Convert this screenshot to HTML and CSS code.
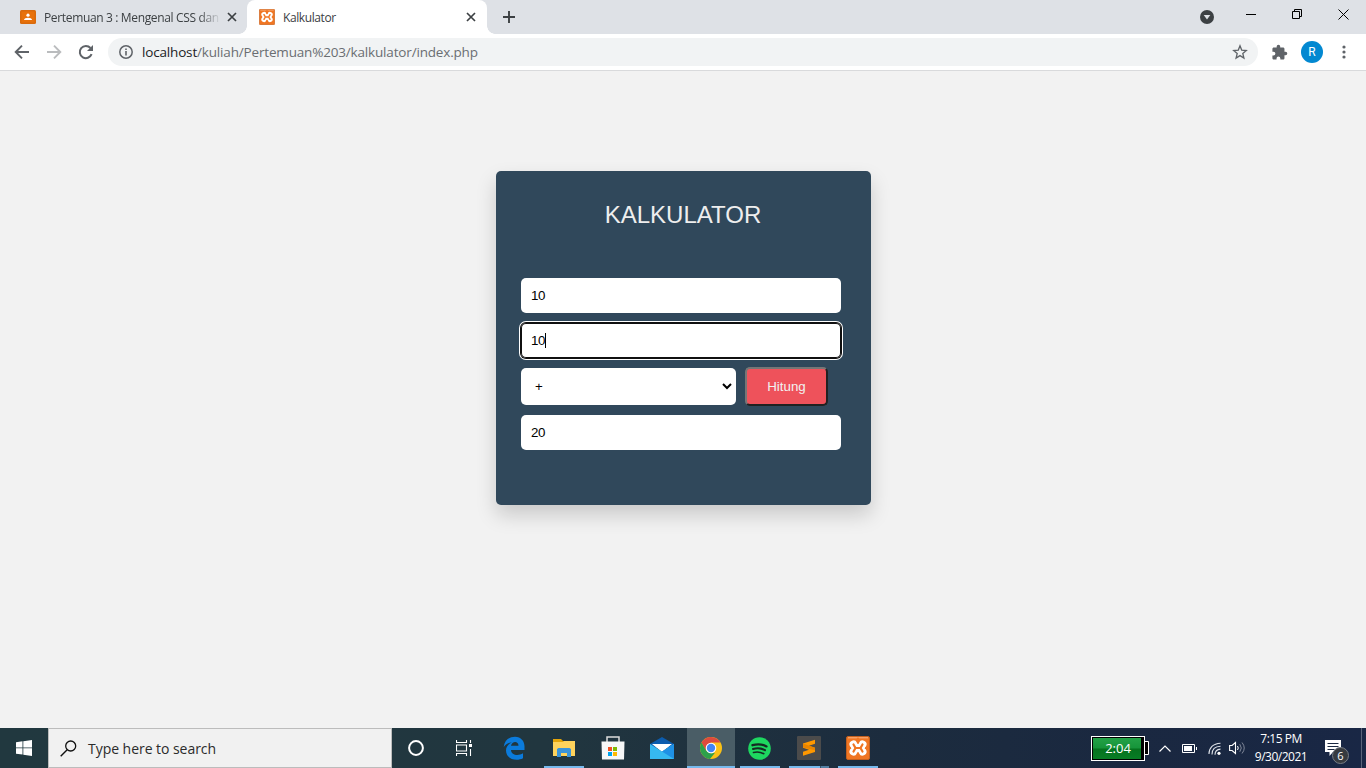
FILE: index.html
```html
<!DOCTYPE html>
<html lang="id">
<head>
<meta charset="utf-8">
<title>Kalkulator</title>
<link rel="stylesheet" href="styles.css">
</head>
<body>
<svg class="defs" width="0" height="0">
  <symbol id="xampp" viewBox="0 0 24 24">
    <rect x=".5" y=".5" width="23" height="23" rx="1.500" fill="#f07623" stroke="#c4601f"/>
    <path d="M2 1.800h20" stroke="#f9b483" stroke-width="1"/>
    <g fill="none" stroke-linecap="round" stroke-linejoin="round">
      <path d="M7.500 8.500l2 3.500-2 3.500M16.500 8.500l-2 3.500 2 3.500M9.500 12h5" stroke="#fff" stroke-width="8"/>
      <path d="M12 2.800v3.600M12 17.600v3.600M3 12h.8M20.200 12h.8" stroke="#f07623" stroke-width="2.400"/>
      <path d="M7.500 8.500l2 3.500-2 3.500M16.500 8.500l-2 3.500 2 3.500M9.500 12h5" stroke="#f07623" stroke-width="2.200"/>
    </g>
  </symbol>
  <symbol id="close" viewBox="0 0 10 10"><path d="M1 1l8 8M9 1L1 9" stroke="#3c4043" stroke-width="1.700"/></symbol>
</svg>
<header class="tabs">
  <div class="tab tab-idle">
    <svg class="fav" viewBox="0 0 16 14"><rect width="16" height="14" rx="1.500" fill="#d96a0c"/><rect x="1.500" y="1.500" width="13" height="11" fill="#e8710a"/><circle cx="8" cy="5.200" r="1.600" fill="#fff"/><path d="M4 10c0-3 8-3 8 0z" fill="#fff"/></svg>
    <span class="tab-name fade">Pertemuan 3 : Mengenal CSS dan</span>
    <svg class="x"><use href="#close"/></svg>
  </div>
  <div class="tab tab-active">
    <svg class="fav-x"><use href="#xampp"/></svg>
    <span class="tab-name kal">Kalkulator</span>
    <svg class="x"><use href="#close"/></svg>
  </div>
  <svg class="plus" viewBox="0 0 12 12"><path d="M6 0v12M0 6h12" stroke="#3c4043" stroke-width="1.900"/></svg>
  <div class="window-buttons">
    <svg width="14" height="14" viewBox="0 0 14 14"><circle cx="7" cy="7" r="7" fill="#3c4043"/><path d="M3.700 5h6.600L7 9.500z" fill="#dee1e6"/></svg>
    <svg width="10" height="10" viewBox="0 0 10 10"><path d="M0 5.500h10" stroke="#000"/></svg>
    <svg width="10" height="10" viewBox="0 0 10 10"><path d="M.5 2.500h7v7h-7zM2.500 2.500v-2h7v7h-2" fill="none" stroke="#000"/></svg>
    <svg width="11" height="11" viewBox="0 0 11 11"><path d="M.5.5l10 10M10.500.5l-10 10" stroke="#000"/></svg>
  </div>
</header>
<nav class="toolbar">
  <svg width="16" height="16" viewBox="0 0 16 16"><path d="M15 8H2M8 1.700L1.700 8 8 14.300" fill="none" stroke="#5f6368" stroke-width="1.900"/></svg>
  <svg width="16" height="16" viewBox="0 0 16 16"><path d="M1 8h13M8 1.700L14.300 8 8 14.300" fill="none" stroke="#babcbe" stroke-width="1.900"/></svg>
  <svg width="16" height="16" viewBox="0 0 16 16"><path d="M13.600 10.200A6.100 6.100 0 1 1 12.500 4" fill="none" stroke="#5f6368" stroke-width="2"/><path d="M15 1v6H9z" fill="#5f6368"/></svg>
  <div class="address">
    <svg width="14" height="14" viewBox="0 0 14 14"><circle cx="7" cy="7" r="6.200" fill="none" stroke="#5f6368" stroke-width="1.500"/><path d="M7 6v4.500M7 3.500V5" stroke="#5f6368" stroke-width="1.600"/></svg>
    <span class="url"><b>localhost</b>/kuliah/Pertemuan%203/kalkulator/index.php</span>
    <svg class="star" width="16" height="16" viewBox="0 0 16 16"><path d="M8 1.800l1.700 4.300 4.600.4-3.500 3 1.100 4.500L8 11.600 4.100 14l1.100-4.500-3.500-3 4.600-.4z" fill="none" stroke="#5f6368" stroke-width="1.300"/></svg>
  </div>
  <svg class="puzzle" width="17" height="17" viewBox="0 0 24 24"><path fill="#5f6368" d="M20.500 11H19V7c0-1.100-.9-2-2-2h-4V3.500a2.500 2.500 0 0 0-5 0V5H4c-1.100 0-2 .9-2 2v3.800h1.500a2.700 2.700 0 0 1 0 5.400H2V20c0 1.100.9 2 2 2h3.800v-1.500a2.700 2.700 0 0 1 5.400 0V22H17c1.100 0 2-.9 2-2v-4h1.500a2.500 2.500 0 0 0 0-5z"/></svg>
  <span class="avatar">R</span>
  <svg class="dots" width="4" height="14" viewBox="0 0 4 14"><g fill="#5f6368"><circle cx="2" cy="2" r="1.600"/><circle cx="2" cy="7" r="1.600"/><circle cx="2" cy="12" r="1.600"/></g></svg>
</nav>
<main class="page">
  <form class="card">
    <h2>KALKULATOR</h2>
    <input class="field" type="text" value="10">
    <div class="field focused">10<i class="caret"></i></div>
    <div class="row">
      <div class="operator">
        <span>+</span>
        <svg width="10" height="7" viewBox="0 0 10 7"><path d="M1 1l4 4 4-4" fill="none" stroke="#000" stroke-width="2"/></svg>
      </div>
      <button class="submit" type="button">Hitung</button>
    </div>
    <input class="field" type="text" value="20">
  </form>
</main>
<footer class="taskbar">
  <div class="start"><svg width="16" height="16" viewBox="0 0 16 16"><path fill="#fff" d="M0 2.200l6.500-.9v6.200H0zM7.300 1.200L16 0v7.500H7.300zM0 8.300h6.500v6.300L0 13.700zM7.300 8.300H16V16l-8.700-1.200z"/></svg></div>
  <div class="search">
    <svg width="17" height="17" viewBox="0 0 17 17"><circle cx="10.700" cy="6" r="5" fill="none" stroke="#111" stroke-width="1.300"/><path d="M7.200 9.700L.7 16.200" stroke="#111" stroke-width="1.400"/></svg>
    <span>Type here to search</span>
  </div>
  <div class="app system"><svg width="18" height="18" viewBox="0 0 18 18"><circle cx="9" cy="9" r="6.900" fill="none" stroke="#fff" stroke-width="2"/></svg></div>
  <div class="app system"><svg width="17" height="16" viewBox="0 0 17 16"><path d="M.5 0v2.500h10V0M.5 16v-2.500h10V16M.5 5h10v6H.5zM14.500 0v3M14.500 9v7" fill="none" stroke="#fff" stroke-width="1.100"/><rect x="13" y="4" width="3" height="3" fill="#fff"/></svg></div>
  <div class="app edge"><svg width="22" height="24" viewBox="0 0 22 24"><path fill="#0b7bdc" d="M.7 11C1.500 4 6.500.8 12 .8c6 0 9.500 4.500 9.500 9.500v3.600H8c.2 5.500 7.500 6.300 12 3.400v5C13 25.800 3 23 3 14.600c0-4 2.500-6.800 5.800-8C5.500 6.500 2.500 8.300.7 11zM8 9.800h7.500C15.500 4.500 8.800 5 8 9.800z"/></svg></div>
  <div class="app open"><svg width="22" height="18" viewBox="0 0 22 18"><path d="M0 0h8l2 2h12v15H0z" fill="#e5a50a"/><path d="M0 3h10l1-1h11v15H0z" fill="#ffd35c"/><path d="M4 18v-8l1.500-1h11l1.500 1v8h-4v-4H8v4z" fill="#3b94d9"/></svg></div>
  <div class="app"><svg width="24" height="24" viewBox="0 0 24 24"><path d="M6 6V1h12v5" fill="none" stroke="#ddd" stroke-width="1.500"/><path d="M.5 5.500h23l-.5 18H1z" fill="#f7f7f7"/><path fill="#f25022" d="M7 11h4v4H7z"/><path fill="#7fba00" d="M12 11h4v4h-4z"/><path fill="#00a4ef" d="M7 16h4v4H7z"/><path fill="#ffb900" d="M12 16h4v4h-4z"/></svg></div>
  <div class="app"><svg width="24" height="22" viewBox="0 0 24 22"><path fill="#0c5cad" d="M0 7l12-7 12 7v4H0z"/><path fill="#fff" d="M2 7h20l-10 8z"/><path fill="#36b9f1" d="M0 7l12 7.500L24 7v15H0z"/><path fill="#1f91e5" d="M24 7v15L12 14.500z"/></svg></div>
  <div class="app open current"><svg width="22" height="22" viewBox="0 0 22 22"><circle cx="11" cy="11" r="11" fill="#fbc116"/><path fill="#dd4a3e" d="M1.500 5.500A11 11 0 0 1 20.500 5.600H11L6 14z"/><path fill="#2da14b" d="M1.500 5.500L6.200 13.700 11 16.500l4-.8L10 22A11 11 0 0 1 1.500 5.500z"/><circle cx="11" cy="11" r="5.300" fill="#fff"/><circle cx="11" cy="11" r="4.200" fill="#4285f4"/></svg></div>
  <div class="app open"><svg width="23" height="23" viewBox="0 0 23 23"><circle cx="11.500" cy="11.500" r="11.300" fill="#1ed760"/><g fill="none" stroke="#152a23" stroke-linecap="round"><path d="M4.500 8.200c5-1.500 10-1 14 1.200" stroke-width="2.300"/><path d="M5 12c4.500-1.300 8.500-.8 12 1.200" stroke-width="2"/><path d="M5.500 15.500c4-1 7-.5 10.300 1.200" stroke-width="1.600"/></g></svg></div>
  <div class="app open stacked"><svg width="24" height="24" viewBox="0 0 24 24"><rect width="24" height="24" rx="1" fill="#4b4b4b"/><path fill="#ff9800" d="M6 7.500l12-3.800v4L12 9.800l6 1.900v4.200L6 19.800v-4l6-2-6-2z"/><path fill="#e88400" d="M6 7.500l12 4.200v2.500L6 11.500z"/></svg></div>
  <div class="app open"><svg width="24" height="24"><use href="#xampp"/></svg></div>
  <div class="tray">
    <div class="battery"><div class="charge">2:04</div><svg width="4" height="24" viewBox="0 0 4 24"><path d="M0 5.500h3.500v13H0" fill="#000" stroke="#fff"/></svg></div>
    <svg class="up" width="12" height="7" viewBox="0 0 12 7"><path d="M.5 6.500L6 1l5.500 5.500" fill="none" stroke="#fff" stroke-width="1.200"/></svg>
    <svg class="power" width="15" height="9" viewBox="0 0 15 9"><path d="M.5.500h12v8H.5zM14.500 3v3" fill="none" stroke="#fff"/><path fill="#fff" d="M2 2h8v5H2z"/></svg>
    <svg class="wifi" width="13" height="13" viewBox="0 0 13 13"><g fill="none" stroke="#dfe3e9" stroke-width="1.100"><path d="M1 12C1 6 5 1.500 12.500 1.200M4 12.500c0-5 3-8 8.500-8.200M7 12.800c0-3.500 2-5.500 5.500-5.700"/></g><circle cx="11" cy="11.300" r="1.600" fill="#fff"/></svg>
    <svg class="sound" width="16" height="14" viewBox="0 0 16 14"><path d="M.6 4.500h2.500L6.500 1.500v11l-3.400-3H.6z" fill="none" stroke="#fff" stroke-width="1.100"/><path d="M8.500 5q1.500 2 0 4" fill="none" stroke="#fff"/><path d="M10.800 3.200q3 3.800 0 7.600M13 1.500q4.500 5.500 0 11" fill="none" stroke="#7f8798"/></svg>
    <div class="clock"><span class="time">7:15 PM</span><span>9/30/2021</span></div>
    <div class="notes"><svg width="17" height="16" viewBox="0 0 17 16"><path fill="#fff" d="M0 0h16v12H8l-3.500 4v-4H0z"/><path d="M2.500 3.500h11M2.500 6.500h11M2.500 9.500h7" stroke="#1b2942"/></svg><span>6</span></div>
    <i class="peek"></i>
  </div>
</footer>
</body>
</html>
```
FILE: styles.css
```css
* { box-sizing: border-box; }
body { margin: 0; width: 1366px; height: 768px; overflow: hidden; display: flex; flex-direction: column; font-family: "Open Sans", "Noto Sans", sans-serif; background: #f2f2f2; }
svg { display: block; flex: none; }
.defs { position: absolute; }

.tabs { height: 34px; background: #dee1e6; display: flex; align-items: center; }
.tab { height: 34px; display: flex; align-items: center; font-size: 12px; color: #3c4043; }
.tab-idle { width: 247px; padding-left: 20px; }
.tab-active { width: 240px; padding-left: 12px; background: #fff; border-radius: 8px 8px 0 0; position: relative; }
.tab-active::before, .tab-active::after { content: ""; position: absolute; bottom: 0; width: 8px; height: 8px; }
.tab-active::before { left: -8px; background: radial-gradient(circle at 0 0, #dee1e6 7.500px, #fff 8px); }
.tab-active::after { right: -8px; background: radial-gradient(circle at 100% 0, #dee1e6 7.500px, #fff 8px); }
.fav { width: 16px; height: 14px; }
.fav-x { width: 16px; height: 16px; }
.tab-name { margin-left: 8px; width: 176px; overflow: hidden; white-space: nowrap; letter-spacing: -0.350px; }
.kal { letter-spacing: -0.400px; }
.fade { -webkit-mask-image: linear-gradient(to right, #000 155px, transparent 177px); }
.x { width: 10px; height: 10px; margin-left: 7px; }
.plus { width: 12px; height: 12px; margin-left: 16px; }
.window-buttons { margin-left: auto; width: 166px; padding-bottom: 6px; display: flex; align-items: center; }
.window-buttons svg:nth-child(1) { margin-top: 6px; }
.window-buttons svg:nth-child(2) { margin-left: 32px; }
.window-buttons svg:nth-child(n+3) { margin-left: 36px; }

.toolbar { height: 37px; background: #fff; border-bottom: 1px solid #d9dadc; display: flex; align-items: center; padding-left: 14px; }
.toolbar > svg:nth-child(2), .toolbar > svg:nth-child(3) { margin-left: 16px; }
.address { margin-left: 14px; width: 1150px; height: 28px; border-radius: 14px; background: #f1f3f4; display: flex; align-items: center; padding: 0 10px 0 11px; }
.url { margin-left: 9px; font-size: 13.500px; letter-spacing: -0.170px; color: #6a6e72; white-space: nowrap; }
.url b { font-weight: 400; color: #202124; }
.star { margin-left: auto; }
.puzzle { margin-left: 13px; }
.avatar { margin-left: 13px; width: 22px; height: 22px; border-radius: 50%; background: #0288d1; color: #fff; font: 12px/22px Roboto, sans-serif; text-align: center; }
.dots { margin-left: 19px; }

.page { flex: 1; padding-top: 100px; display: flex; justify-content: center; align-items: flex-start; padding-left: 1px; }
.card { width: 375px; height: 334px; background: #30485b; border-radius: 5px; box-shadow: 0 10px 20px rgba(0,0,0,.17); padding: 29px 25px; display: flex; flex-direction: column; font-family: "Liberation Sans", Arial, sans-serif; }
.card h2 { margin: 0 1px 49px 0; height: 29px; line-height: 30px; font-weight: 400; font-size: 24px; text-align: center; color: #eee; }
.field { flex: none; width: 320px; height: 35px; margin: 0 0 10px; border: 0; border-radius: 5px; background: #fff; padding: 0 10px; font: 13.333px/35px "Liberation Sans", Arial, sans-serif; letter-spacing: -0.300px; color: #000; outline: none; }
.focused { display: flex; align-items: center; box-shadow: inset 0 0 0 1px #101010, 0 0 0 1px #101010, 0 0 0 2px #fff; }
.caret { width: 1px; height: 15px; background: #000; }
.row { flex: none; display: flex; align-items: center; height: 39px; margin: -1px 0 9px; }
.operator { width: 215px; height: 37px; border-radius: 5px; background: #fff; display: flex; align-items: center; justify-content: space-between; padding: 0 4px 0 14px; font-size: 13.333px; }
.submit { margin-left: 9px; width: 83px; height: 39px; padding: 0; border: 2px solid; border-color: #767676 #212121 #212121 #767676; border-radius: 5px; background: #ee525b; color: #f1f1f1; font: 13.333px "Liberation Sans", Arial, sans-serif; }

.taskbar { height: 40px; display: flex; background: linear-gradient(90deg, #21383f 0, #21363f 40%, #1c2c3e 65%, #1a2840 82%, #192745 100%); }
.start { width: 48px; display: flex; align-items: center; justify-content: center; }
.search { width: 344px; border: 1px solid #bcbcbc; background: #f1f1f1; display: flex; align-items: center; padding-left: 11px; font-size: 14px; color: #2b2b2b; }
.search span { margin-left: 11px; white-space: nowrap; letter-spacing: -0.040px; }
.app { width: 49.100px; display: flex; align-items: center; justify-content: center; position: relative; }
.system { padding-right: 2px; }
.edge { padding-right: 1px; }
.open::after { content: ""; position: absolute; bottom: 0; left: 5px; width: 40px; height: 2px; background: #76b9ed; }
.open:not(.current) { padding-left: 1px; }
.current { background: #4a5d66; width: 48px; }
.current::after { left: 0; width: 48px; }
.stacked::after { background: linear-gradient(90deg, #76b9ed 31px, #37556a 31px, #37556a 32px, #527fa3 32px); }
.tray { margin-left: auto; width: 275px; display: flex; align-items: center; color: #fff; font-size: 12px; }
.battery { display: flex; align-items: center; width: 58px; }
.charge { width: 55px; height: 25px; border: 1px solid #fff; background: linear-gradient(#23a247, #16943a 48%, #05721e 52%, #087d25) 1px 1px / 48px 21px no-repeat #000; line-height: 23px; text-align: center; font-size: 13px; }
.up { margin-left: 10px; }
.power { margin-left: 11px; }
.wifi { margin-left: 11px; }
.sound { margin-left: 8px; }
.clock { margin-left: 10px; width: 52px; display: flex; flex-direction: column; align-items: center; line-height: 18px; letter-spacing: -0.500px; white-space: nowrap; }
.notes { margin-left: 18px; position: relative; }
.notes span { position: absolute; left: 7px; top: 7px; width: 17px; height: 17px; border-radius: 50%; border: 1px solid #777d85; background: #373b40; font-size: 11px; line-height: 15px; text-align: center; }
.peek { width: 1px; height: 40px; margin-left: auto; margin-right: 4px; background: #59647a; }
```
